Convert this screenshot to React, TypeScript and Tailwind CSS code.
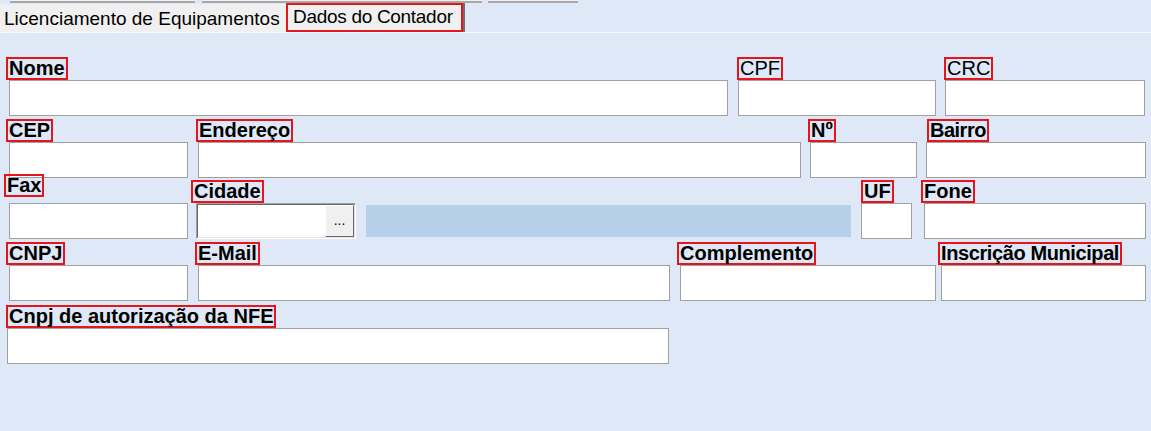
import React from "react";

const FONT = "font-['Liberation_Sans',Arial,sans-serif]";

function Label({
  children,
  bold = true,
  className = "",
}: {
  children: React.ReactNode;
  bold?: boolean;
  className?: string;
}) {
  return (
    <span
      className={`inline-block self-start whitespace-nowrap border-2 border-[#e8141c] px-[1px] text-[20px] leading-[19px] text-black ${
        bold ? "font-bold" : "font-normal"
      } ${className}`}
    >
      {children}
    </span>
  );
}

function Input({ className = "" }: { className?: string }) {
  return <div className={`h-[36px] border border-[#a0a0a0] bg-white ${className}`} />;
}

function Field({
  label,
  bold = true,
  wrap,
  labelClass = "",
  children,
}: {
  label: string;
  bold?: boolean;
  wrap: string;
  labelClass?: string;
  children?: React.ReactNode;
}) {
  return (
    <div className={`flex flex-col ${wrap}`}>
      <Label bold={bold} className={labelClass}>
        {label}
      </Label>
      {children ?? <Input />}
    </div>
  );
}

export default function App() {
  return (
    <div className={`${FONT} h-[431px] w-[1151px] overflow-hidden bg-[#dee8f7] text-black`}>
      {/* upper (hidden) tab row edges */}
      <div className="flex h-[3px]">
        <div className="ml-[10px] h-[3px] w-[185px] border-b-2 border-[#a8a8a8] bg-[#f0f0f0]" />
        <div className="ml-[7px] h-[3px] w-[280px] border-b-2 border-[#a8a8a8] bg-[#f0f0f0]" />
        <div className="ml-[6px] h-[3px] w-[90px] border-b-2 border-[#a8a8a8] bg-[#f0f0f0]" />
      </div>

      {/* tabs */}
      <div className="flex h-[29px] items-end">
        <div className="h-[28px] w-[286px] bg-[#f0f0f0] pl-[4px] pt-[1px] text-[19px] leading-[27px]">
          Licenciamento de Equipamentos
        </div>
        <div className="flex h-[29px] items-stretch">
          <div className="w-[177px] border-2 border-[#e8141c] bg-[#f0f0f0] pl-[5px] text-[19px] leading-[24px] tracking-[-0.3px]">
            Dados do Contador
          </div>
          <div className="w-[2px] bg-[#6e6e6e]" />
        </div>
      </div>
      <div className="h-[1px] bg-[#f8fbff]" />

      {/* form */}
      <div className="flex flex-col">
        {/* row 1 */}
        <div className="flex h-[83px] items-end">
          <Field label="Nome" wrap="ml-[9px] w-[719px]" labelClass="-ml-[3px]" />
          <Field label="CPF" bold={false} wrap="ml-[10px] w-[198px]" labelClass="-ml-[1px]" />
          <Field label="CRC" bold={false} wrap="ml-[9px] w-[200px]" labelClass="-ml-[1px]" />
        </div>

        {/* row 2 */}
        <div className="flex h-[62px] items-end">
          <Field label="CEP" wrap="ml-[9px] w-[179px]" labelClass="-ml-[3px]" />
          <Field label="Endereço" wrap="ml-[10px] w-[603px]" labelClass="-ml-[2px]" />
          <Field label="Nº" wrap="ml-[9px] w-[107px]" labelClass="-ml-[2px]" />
          <Field label="Bairro" wrap="ml-[9px] w-[220px]" labelClass="ml-[1px] tracking-[-0.5px]" />
        </div>

        {/* row 3 */}
        <div className="flex h-[61px] items-end">
          <Field label="Fax" wrap="ml-[9px] w-[179px]" labelClass="-ml-[5px] mb-[6px]" />
          <Field label="Cidade" wrap="ml-[8px] w-[160px]" labelClass="-ml-[5px]">
            <div className="flex h-[36px] border border-b-white border-l-[#a0a0a0] border-r-white border-t-[#a0a0a0]">
              <div className="flex flex-1 border border-b-[#e3e3e3] border-l-[#6a6a6a] border-r-[#e3e3e3] border-t-[#6a6a6a] bg-white">
                <div className="flex-1" />
                <div className="flex w-[29px] items-center justify-center border border-b-[#6a6a6a] border-l-white border-r-[#6a6a6a] border-t-white bg-[#f0f0f0] pb-[2px] text-[14px] leading-none">
                  ...
                </div>
              </div>
            </div>
          </Field>
          <div className="mb-[2px] ml-[10px] h-[32px] w-[485px] bg-[#b8cfe9]" />
          <Field label="UF" wrap="ml-[10px] w-[51px]" />
          <Field label="Fone" wrap="ml-[12px] w-[222px]" labelClass="-ml-[3px]" />
        </div>

        {/* row 4 */}
        <div className="flex h-[62px] items-end">
          <Field label="CNPJ" wrap="ml-[9px] w-[179px]" labelClass="-ml-[3px]" />
          <Field label="E-Mail" wrap="ml-[10px] w-[472px]" labelClass="-ml-[3px]" />
          <Field label="Complemento" wrap="ml-[10px] w-[256px]" labelClass="-ml-[3px]" />
          <Field
            label="Inscrição Municipal"
            wrap="ml-[5px] w-[205px]"
            labelClass="-ml-[3px] tracking-[-0.4px]"
          />
        </div>

        {/* row 5 */}
        <div className="flex h-[63px] items-end">
          <Field label="Cnpj de autorização da NFE" wrap="ml-[7px] w-[662px]" labelClass="-ml-[1px]" />
        </div>
      </div>
    </div>
  );
}
